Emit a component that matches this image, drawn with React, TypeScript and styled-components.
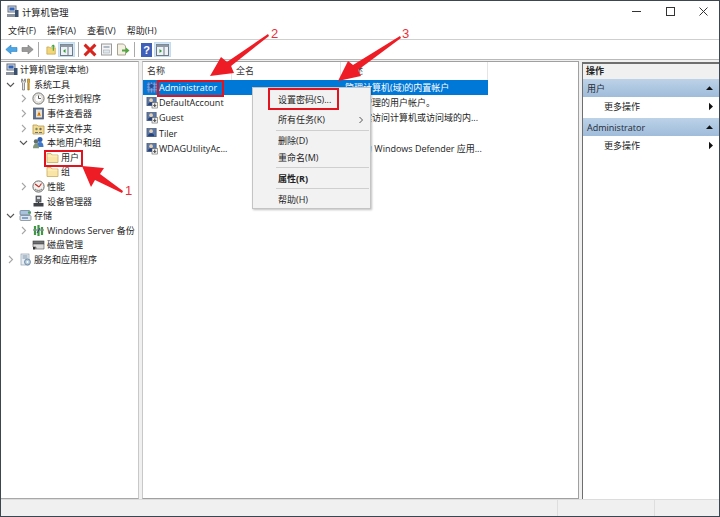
import React from "react";
import styled, { createGlobalStyle } from "styled-components";

const Global = createGlobalStyle`
  html, body { margin: 0; padding: 0; overflow: hidden; background: #fff; }
  * { box-sizing: border-box; }
  body { font-family: "Open Sans", "Noto Sans CJK SC", sans-serif; font-size: 9px; color: #222; }
`;

const Window = styled.div`
  position: relative; width: 720px; height: 517px; display: flex; flex-direction: column;
  background: #f0f0f0; border: 1px solid #3c4650; overflow: hidden;
`;
const TitleBar = styled.div`
  height: 21px; flex: none; background: #fff; display: flex; align-items: center; padding-left: 5px; gap: 3px; font-size: 9.3px;
`;
const TitleText = styled.span`flex: 1;`;
const WinControls = styled.div`display: flex; align-items: center; height: 100%; padding-right: 11px; gap: 24.5px;`;
const MenuBar = styled.div`
  height: 18px; flex: none; background: #fff; display: flex; align-items: center; padding-left: 7px; gap: 11px; border-bottom: 1px solid #cfcfcf;
`;
const ToolBar = styled.div`
  height: 20px; flex: none; background: #fff; display: flex; align-items: center; padding-left: 2px; border-bottom: 1px solid #b9b9b9;
`;
const ToolBtn = styled.div<{ $w?: number; $on?: boolean }>`
  width: ${p => p.$w ?? 16}px; height: 15px; display: flex; align-items: center; justify-content: center;
  background: ${p => (p.$on ? "#d3e6f6" : "transparent")};
  border: 1px solid ${p => (p.$on ? "#c4dcf0" : "transparent")};
`;
const ToolSep = styled.div<{ $r: number }>`width: 1px; height: 15px; background: #a9a9a9; margin: 0 ${p => p.$r}px 0 3px;`;
const Panes = styled.div`flex: 1; display: flex; min-height: 0; padding-top: 1px; background: #f0f0f0;`;
const TreePane = styled.div`
  width: 138px; flex: none; background: #fff; border-top: 1px solid #a0a0a0; border-right: 1px solid #c8c8c8; border-bottom: 1px solid #a8a8a8; padding-top: 0.5px;
`;
const TreeRow = styled.div<{ $level: number }>`
  height: 14.6px; display: flex; align-items: center; padding-left: ${p => p.$level}px; white-space: nowrap;
`;
const ChevronSlot = styled.span`width: 16px; flex: none; display: flex; justify-content: flex-start; padding-left: 3px; margin-left: -1px;`;
const IconSlot = styled.span`width: 14px; height: 13px; flex: none; display: flex; align-items: center; justify-content: flex-start; margin-right: 1px;`;
const ListPane = styled.div`
  width: 437px; flex: none; margin-left: 3px; background: #fff; border-top: 1px solid #a0a0a0; border-left: 1px solid #c8c8c8; border-right: 1px solid #a0a0a0; border-bottom: 1px solid #a0a0a0;
`;
const ListHeader = styled.div`display: grid; grid-template-columns: 89px 109px 147px; height: 17.6px; align-items: center;`;
const HeaderCell = styled.div`height: 18px; line-height: 18px; padding-left: 4px; border-right: 1px solid #e5e5e5; color: #333;`;
const ListRow = styled.div<{ $selected?: boolean }>`
  display: grid; grid-template-columns: 89px 109px 147px; height: 15.3px; align-items: center; white-space: nowrap;
  color: ${p => (p.$selected ? "#fff" : "#222")};
`;
const NameCell = styled.div<{ $selected?: boolean }>`
  display: flex; align-items: center; gap: 1px; padding-left: 3px; height: 100%; overflow: visible; background: ${p => (p.$selected ? "#0078d7" : "transparent")};
`;
const Cell = styled.div<{ $selected?: boolean }>`
  height: 100%; line-height: 15px; padding-left: 4px; overflow: hidden; background: ${p => (p.$selected ? "#0078d7" : "transparent")};
`;
const ActionPane = styled.div`
  width: 137px; flex: none; margin-left: 3px; margin-top: 1px; background: #fff; border-top: 2px solid #6e6e6e; border-left: 1px solid #6e6e6e; 
`;
const ActionHead = styled.div`height: 15px; line-height: 14px; padding-left: 3px; background: #f0f0f0; font-weight: 700; color: #222;`;
const ActionBand = styled.div`
  height: 18px; display: flex; align-items: center; justify-content: space-between; padding: 0 5px 0 4px;
  background: linear-gradient(#bcd2e8, #9fbcda); color: #1f2a36; margin-top: 0;
`;
const ActionItem = styled.div`
  height: 21px; display: flex; align-items: center; justify-content: space-between; padding: 0 5px 3px 21px;
`;
const StatusBar = styled.div`
  height: 17px; flex: none; background: #f0f0f0; border-top: 1px solid #dcdcdc; display: grid; grid-template-columns: 557px 97px 1fr;
`;
const StatusCell = styled.div`border-right: 1px solid #dedede;`;

const ContextMenu = styled.div`
  position: absolute; left: 251px; top: 86px; width: 119px; height: 122px; background: #f2f2f2; border: 1px solid #c4c4c4;
  box-shadow: 1px 1px 2px rgba(0,0,0,.25); padding-top: 1px;
`;
const MenuItem = styled.div<{ $h: number; $bold?: boolean }>`
  height: ${p => p.$h}px; display: flex; align-items: center; justify-content: space-between; padding: 0 6px 0 25px;
  font-weight: ${p => (p.$bold ? 700 : 400)}; color: #222;
`;
const MenuSep = styled.div<{ $top?: number }>`height: 1px; background: #cfcfcf; margin: ${p => p.$top ?? 0}px 1px 0 23px;`;
const RedBox = styled.div<{ $x: number; $y: number; $w: number; $h: number }>`
  position: absolute; left: ${p => p.$x}px; top: ${p => p.$y}px; width: ${p => p.$w}px; height: ${p => p.$h}px; border: 2px solid #e2131e; pointer-events: none;
`;
const ArrowLayer = styled.svg`position: absolute; left: -1px; top: -1px; width: 720px; height: 517px; pointer-events: none;`;
const Num = styled.span<{ $x: number; $y: number }>`
  position: absolute; left: ${p => p.$x}px; top: ${p => p.$y}px; color: #e8303a; font-family: "Liberation Sans", sans-serif; font-size: 13px; line-height: 13px;
`;

const I = ({ children, w = 13, h = 13, vb = "0 0 13 13" }: { children: React.ReactNode; w?: number; h?: number; vb?: string }) => (
  <svg width={w} height={h} viewBox={vb} style={{ display: "block" }}>{children}</svg>
);
const Chevron = ({ open }: { open?: boolean }) => (
  <I w={9} h={9} vb="0 0 9 9">
    {open ? <path d="M1 3 L4.5 6.5 L8 3" fill="none" stroke="#555" strokeWidth="1.1" /> : <path d="M3 1 L6.5 4.5 L3 8" fill="none" stroke="#a6a6a6" strokeWidth="1.1" />}
  </I>
);
const CompIcon = () => (
  <I><rect x="2" y="1" width="8" height="6" fill="#d8dde4" stroke="#66707c" /><rect x="3.5" y="2.5" width="5" height="3" fill="#2f62b8" /><path d="M1 9 h9 v3 h-9z" fill="#8a939e" /><rect x="9" y="5" width="3.5" height="7" fill="#39506e" /></I>
);
const ToolsIcon = () => (
  <I><path d="M2.5 1 L2.5 4 L3.5 5 V12 H5.5 V5 L6.5 4 V1 L5.5 1 V3 H3.5 V1z" fill="#e4e4e4" stroke="#6b6b6b" strokeWidth=".7" /><path d="M8.5 1 h2 v3.5 l-.3 .8 v6.7 h-1.4 V5.3 L8.5 4.5z" fill="#e3a92b" stroke="#8c6a17" strokeWidth=".6" /></I>
);
const ClockIcon = () => (
  <I><circle cx="6.5" cy="6.5" r="5.6" fill="#e9e6dc" stroke="#777" /><circle cx="6.5" cy="6.5" r="3.7" fill="#fff" stroke="#bbb" strokeWidth=".5" /><path d="M6.5 3.5 v3 h2.4" fill="none" stroke="#444" strokeWidth=".9" /></I>
);
const EventIcon = () => (
  <I><rect x="1.5" y="1" width="10" height="11" fill="#5a6f92" stroke="#4c5565" strokeWidth=".7" /><rect x="4" y="2.5" width="6" height="8" fill="#e6e2d8" /><path d="M7 4 L9 9 H5z" fill="#e8a020" /><rect x="6.7" y="6" width=".8" height="1.8" fill="#a5251c" /></I>
);
const ShareIcon = () => (
  <I><path d="M1 3 h4 l1 1 h6 v8 H1z" fill="#f2dc96" stroke="#b99a4c" strokeWidth=".8" /><circle cx="4.5" cy="7" r="1.2" fill="#7a8a5a" /><circle cx="8.5" cy="7" r="1.2" fill="#7a6a5a" /><path d="M3 10.5 h3 M7 10.5 h3" stroke="#66768a" strokeWidth="1.2" /></I>
);
const UsersGroup = () => (
  <I><circle cx="8" cy="3.5" r="2.5" fill="#2f5fae" /><path d="M4.5 11 q0-5 3.5-5 t3.5 5z" fill="#3f78c8" /><circle cx="4" cy="5.5" r="2.2" fill="#5e6f6a" /><path d="M1 12.3 q0-4.5 3-4.5 t3 4.5z" fill="#80967a" /></I>
);
const FolderIcon = () => (
  <I><path d="M1 2.5 h4 l1 1.5 h6 v7.5 H1z" fill="#f9e6a6" stroke="#c9ab5c" strokeWidth=".8" /><path d="M1.6 5 h9.8" stroke="#fff3c8" /></I>
);
const PerfIcon = () => (
  <I><circle cx="6.5" cy="6.5" r="5.6" fill="#f1f1ef" stroke="#6a6a6a" /><path d="M3 4 L7 7 M9.5 3.5 L7 7" stroke="#c8281e" strokeWidth="1.1" /><path d="M3 9 a5 5 0 0 0 7 0" fill="none" stroke="#7a7a7a" /></I>
);
const DeviceIcon = () => (
  <I><rect x="4" y="1" width="5" height="6" fill="#6f7378" stroke="#3c3f44" strokeWidth=".7" /><rect x="5" y="2" width="3" height="2" fill="#d2d6da" /><rect x="1.5" y="8" width="10" height="3.5" fill="#3f4348" /><rect x="6" y="7" width="1" height="1" fill="#333" /></I>
);
const StorageIcon = () => (
  <I><rect x="1" y="1.5" width="10" height="4.5" rx="1" fill="#a9c3dc" stroke="#5b7690" strokeWidth=".7" /><rect x="1" y="6.5" width="11" height="5" rx="1" fill="#dfe6ec" stroke="#6e7b86" strokeWidth=".7" /><rect x="9" y="2.5" width="3" height="2" fill="#4aa35a" /><path d="M3 9 h6" stroke="#3e77c0" strokeWidth="1.2" /></I>
);
const BackupIcon = () => (
  <I><path d="M3 2 v9 M6.5 1 v11 M10 3 v8" stroke="#3d9a3f" strokeWidth="2.2" /><path d="M1 6 h11" stroke="#8b8f96" strokeWidth="1.4" /><path d="M5 9 l3 -5" stroke="#28477a" strokeWidth="1" /></I>
);
const DiskIcon = () => (
  <I><rect x="1" y="3" width="11" height="3" fill="#6d6f72" stroke="#3c3c3c" strokeWidth=".6" /><path d="M1 6 h11 v5 h-8 v-2 h-3z" fill="#dcdcdc" stroke="#505050" strokeWidth=".6" /><rect x="1" y="9" width="2.5" height="2.5" fill="#333" /></I>
);
const ServiceIcon = () => (
  <I><rect x="2" y="1" width="8" height="11" fill="#e8eef4" stroke="#8e9eac" strokeWidth=".7" /><path d="M3.5 3 h5 M3.5 5 h5" stroke="#7b90a6" /><circle cx="8.5" cy="9" r="3" fill="#b3c9dc" stroke="#55738f" strokeWidth=".7" /><circle cx="8.5" cy="9" r="1" fill="#fff" /></I>
);
const UserIcon = ({ variant }: { variant: "down" | "plain" | "selected" }) => (
  <I w={12} h={13} vb="0 0 13 13">
    {variant === "selected" ? (
      <><rect x="1" y="1" width="11" height="11" fill="#3a70c0" /><path d="M1 3 h11 M1 6 h11 M1 9 h11 M3 1 v11 M6 1 v11 M9 1 v11" stroke="#7fb0e8" strokeWidth=".8" /><circle cx="6" cy="5" r="2.2" fill="#234a94" /></>
    ) : (
      <>
        <rect x="1" y="1" width="10" height="9" fill="#5a78a8" stroke="#38465c" strokeWidth=".6" />
        <circle cx="5.5" cy="4" r="2" fill="#e8cfae" />
        <path d="M2.2 9.6 q0-3.4 3.3-3.4 t3.3 3.4z" fill="#24427e" />
        {variant === "down" ? (<><rect x="6.5" y="6.5" width="6" height="6" fill="#f2f2f2" stroke="#555" strokeWidth=".6" /><path d="M9.5 7.6 v3 M8 9.3 l1.5 1.6 l1.5-1.6" fill="none" stroke="#111" strokeWidth=".9" /></>) : null}
      </>
    )}
  </I>
);
const UpTri = () => <I w={9} h={6} vb="0 0 9 6"><path d="M1 5 L4.5 1.2 L8 5z" fill="#111" /></I>;
const RightTri = () => <I w={6} h={9} vb="0 0 6 9"><path d="M1 .8 L5 4.5 L1 8.2z" fill="#111" /></I>;
const SmallChevron = () => <I w={6} h={8} vb="0 0 6 8"><path d="M1.5 1 L4.5 4 L1.5 7" fill="none" stroke="#555" strokeWidth="1" /></I>;

const BackIcon = () => <I><path d="M.8 6.5 L6 2 V4.5 H12 V8.5 H6 V11z" fill="#4ba6e6" stroke="#2f7fc0" strokeWidth=".6" /></I>;
const ForwardIcon = () => <I><path d="M12.2 6.5 L7 2 V4.5 H1 V8.5 H7 V11z" fill="#9a9a9a" stroke="#777" strokeWidth=".6" /></I>;
const UpIcon = () => <I><path d="M1 3.5 h3 l1 1 h6 v7.5 H1z" fill="#f3d677" stroke="#b8973f" strokeWidth=".7" /><path d="M8 8 V3 H5.8 L8.5 .6 L11.2 3 H9.3 V8z" fill="#3da53c" /></I>;
const PaneToggle = ({ right }: { right?: boolean }) => (
  <I w={13} h={12} vb="0 0 13 12"><rect x=".5" y=".5" width="12" height="11" fill="#eef2f6" stroke="#6d7a86" /><rect x=".5" y=".5" width="12" height="2.5" fill="#8d99a5" /><path d="M8 3 v8" stroke="#6d7a86" /><path d={right ? "M3.5 5 L6 7 L3.5 9z" : "M5.5 5 L3 7 L5.5 9z"} fill="#2f9a3a" /></I>
);
const DeleteIcon = () => <I w={14} h={14} vb="0 0 13 13"><path d="M1.5 1.5 L11.5 11.5 M11.5 1.5 L1.5 11.5" stroke="#d8241c" strokeWidth="2.8" /></I>;
const PropsIcon = () => <I><rect x="1.5" y="1" width="10" height="11" fill="#f4f4f4" stroke="#9a9a9a" /><path d="M3.5 4 h6" stroke="#9aa7b4" strokeWidth="1.5" /><rect x="3.5" y="7" width="6" height="3" fill="#dfe6ec" stroke="#a8b3bd" strokeWidth=".6" /></I>;
const ExportIcon = () => <I w={14} h={13} vb="0 0 14 13"><path d="M1.5 1 h6 l2 2 v9 h-8z" fill="#f5f1e2" stroke="#a7a28f" /><path d="M6 6.5 h4 V4.5 l3.5 3 l-3.5 3 V8.5 H6z" fill="#52a83f" /></I>;
const HelpIcon = () => <svg width="11" height="14" viewBox="0 0 11 14" style={{ display: "block" }}><rect width="11" height="14" fill="#3f60b8" /><text x="5.5" y="11" textAnchor="middle" fontSize="11" fontWeight="700" fill="#fff" fontFamily="Liberation Sans">?</text></svg>;

const Min = () => <I w={9} h={9} vb="0 0 9 9"><path d="M0 4.5 h9" stroke="#333" /></I>;
const Max = () => <I w={9} h={9} vb="0 0 9 9"><rect x=".5" y=".5" width="8" height="8" fill="none" stroke="#333" /></I>;
const Close = () => <I w={9} h={9} vb="0 0 9 9"><path d="M.5 .5 L8.5 8.5 M8.5 .5 L.5 8.5" stroke="#333" /></I>;

const tree: { l: number; c?: "open" | "closed"; icon: React.ReactNode; t: string }[] = [
  { l: 4, icon: <CompIcon />, t: "计算机管理(本地)" },
  { l: 3, c: "open", icon: <ToolsIcon />, t: "系统工具" },
  { l: 16, c: "closed", icon: <ClockIcon />, t: "任务计划程序" },
  { l: 16, c: "closed", icon: <EventIcon />, t: "事件查看器" },
  { l: 16, c: "closed", icon: <ShareIcon />, t: "共享文件夹" },
  { l: 16, c: "open", icon: <UsersGroup />, t: "本地用户和组" },
  { l: 45, icon: <FolderIcon />, t: "用户" },
  { l: 45, icon: <FolderIcon />, t: "组" },
  { l: 16, c: "closed", icon: <PerfIcon />, t: "性能" },
  { l: 31, icon: <DeviceIcon />, t: "设备管理器" },
  { l: 3, c: "open", icon: <StorageIcon />, t: "存储" },
  { l: 16, c: "closed", icon: <BackupIcon />, t: "Windows Server 备份" },
  { l: 31, icon: <DiskIcon />, t: "磁盘管理" },
  { l: 3, c: "closed", icon: <ServiceIcon />, t: "服务和应用程序" },
];

const users: { n: string; d: string; v: "down" | "plain" | "selected"; s?: boolean }[] = [
  { n: "Administrator", d: "管理计算机(域)的内置帐户", v: "selected", s: true },
  { n: "DefaultAccount", d: "系统管理的用户帐户。", v: "down" },
  { n: "Guest", d: "供来宾访问计算机或访问域的内...", v: "down" },
  { n: "Tiler", d: "", v: "plain" },
  { n: "WDAGUtilityAc...", d: "系统为 Windows Defender 应用...", v: "down" },
];

export default function App() {
  return (
    <Window>
      <Global />
      <TitleBar>
        <CompIcon />
        <TitleText>计算机管理</TitleText>
        <WinControls><Min /><Max /><Close /></WinControls>
      </TitleBar>
      <MenuBar>
        <span>文件(F)</span><span>操作(A)</span><span>查看(V)</span><span>帮助(H)</span>
      </MenuBar>
      <ToolBar>
        <ToolBtn><BackIcon /></ToolBtn>
        <ToolBtn><ForwardIcon /></ToolBtn>
        <ToolSep $r={6} />
        <ToolBtn $w={13}><UpIcon /></ToolBtn>
        <ToolBtn $w={17} $on><PaneToggle /></ToolBtn>
        <ToolSep $r={3} />
        <ToolBtn><DeleteIcon /></ToolBtn>
        <ToolBtn><PropsIcon /></ToolBtn>
        <ToolBtn $w={17}><ExportIcon /></ToolBtn>
        <ToolSep $r={3} />
        <ToolBtn><HelpIcon /></ToolBtn>
        <ToolBtn $w={17} $on><PaneToggle right /></ToolBtn>
      </ToolBar>
      <Panes>
        <TreePane>
          {tree.map(r => (
            <TreeRow key={r.t} $level={r.l}>
              {r.c ? <ChevronSlot><Chevron open={r.c === "open"} /></ChevronSlot> : null}
              <IconSlot>{r.icon}</IconSlot>
              <span>{r.t}</span>
            </TreeRow>
          ))}
        </TreePane>
        <ListPane>
          <ListHeader>
            <HeaderCell>名称</HeaderCell>
            <HeaderCell>全名</HeaderCell>
            <HeaderCell>描述</HeaderCell>
          </ListHeader>
          {users.map(u => (
            <ListRow key={u.n} $selected={u.s}>
              <NameCell $selected={u.s}><UserIcon variant={u.v} /><span>{u.n}</span></NameCell>
              <Cell $selected={u.s} />
              <Cell $selected={u.s}>{u.d}</Cell>
            </ListRow>
          ))}
        </ListPane>
        <ActionPane>
          <ActionHead>操作</ActionHead>
          <ActionBand><span>用户</span><UpTri /></ActionBand>
          <ActionItem><span>更多操作</span><RightTri /></ActionItem>
          <ActionBand><span>Administrator</span><UpTri /></ActionBand>
          <ActionItem><span>更多操作</span><RightTri /></ActionItem>
        </ActionPane>
      </Panes>
      <StatusBar><StatusCell /><StatusCell /><div /></StatusBar>

      <ContextMenu>
        <MenuItem $h={20}>设置密码(S)...</MenuItem>
        <MenuItem $h={21}><span>所有任务(K)</span><SmallChevron /></MenuItem>
        <MenuSep />
        <MenuItem $h={18}>删除(D)</MenuItem>
        <MenuItem $h={16}>重命名(M)</MenuItem>
        <MenuSep $top={2} />
        <MenuItem $h={20} $bold>属性(R)</MenuItem>
        <MenuSep />
        <MenuItem $h={20}>帮助(H)</MenuItem>
      </ContextMenu>

      <RedBox $x={156} $y={79} $w={67} $h={17} />
      <RedBox $x={43} $y={149} $w={39} $h={17} />
      <RedBox $x={267} $y={87} $w={71} $h={22} />
      <ArrowLayer viewBox="0 0 720 517">
        <polygon fill="#ee1c25" points="82,166 104,168 100,174 123,191 122,193 95,180 91,187" />
        <polygon fill="#ee1c25" points="210,76 221,57 227,62 268,34 269,36 231,66 234,73" />
        <polygon fill="#ee1c25" points="338,81 348,61 353,65 400,36 401,38 358,70 361,76" />
      </ArrowLayer>
      <Num $x={124} $y={183}>1</Num>
      <Num $x={270} $y={26}>2</Num>
      <Num $x={401} $y={26}>3</Num>
    </Window>
  );
}
